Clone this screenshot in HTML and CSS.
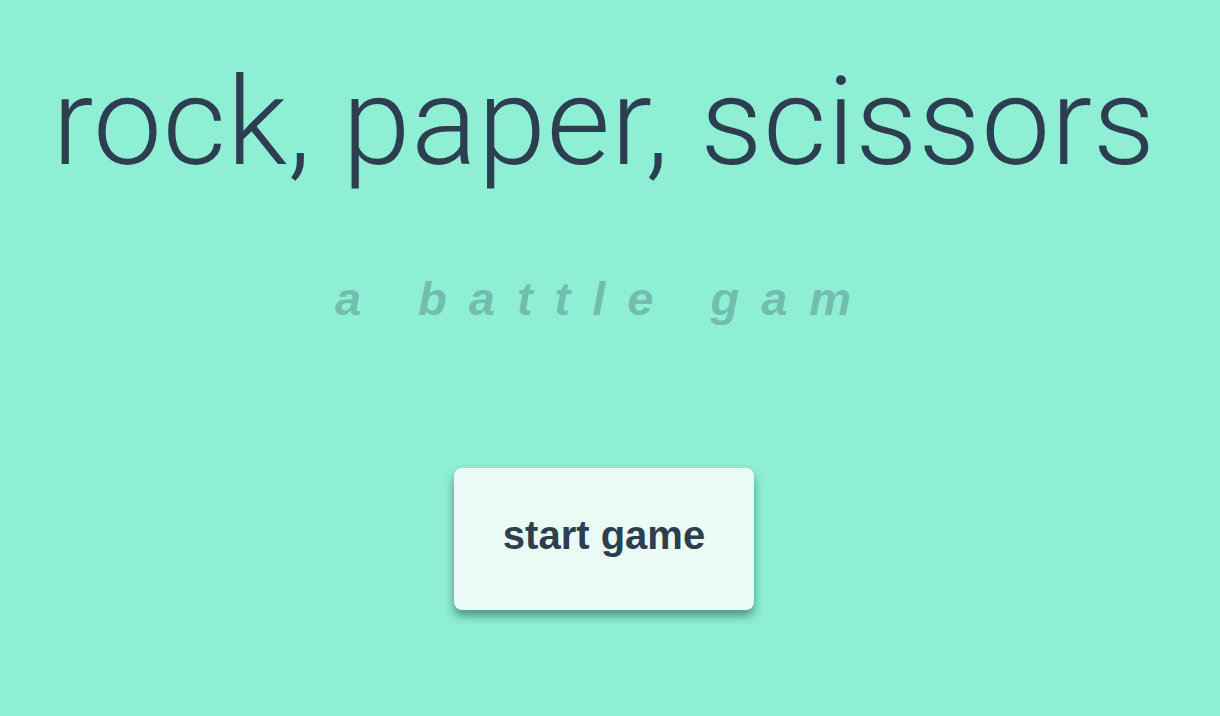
FILE: index.html
```html
<!DOCTYPE html>
<html lang="en">
<head>
<meta charset="utf-8">
<title>rock, paper, scissors</title>
<link rel="stylesheet" href="styles.css">
</head>
<body>
<main class="page">
  <h1 class="title">rock, paper, scissors</h1>
  <p class="subtitle">a battle gam</p>
  <button class="start">start game</button>
</main>
</body>
</html>
```

FILE: styles.css
```css
html, body {
  margin: 0;
  padding: 0;
  height: 100%;
}
body {
  background: #8eefd4;
  color: #2c3e50;
  font-family: Roboto, "Liberation Sans", sans-serif;
}
.page {
  display: flex;
  flex-direction: column;
  align-items: center;
  padding-right: 12px;
}
.title {
  margin: 57px 0 0;
  font-size: 123px;
  font-weight: 300;
  line-height: 130px;
  letter-spacing: 0.6px;
  white-space: nowrap;
}
.subtitle {
  margin: 87px 0 0;
  font-family: "Liberation Sans", Arial, sans-serif;
  font-size: 47px;
  font-weight: bold;
  font-style: italic;
  letter-spacing: 22px;
  line-height: 50px;
  color: rgba(44, 62, 80, 0.3);
}
.start {
  margin-top: 144px;
  width: 300px;
  height: 142px;
  padding: 0 0 8px;
  border: none;
  border-radius: 8px;
  background: #eafaf5;
  color: #2c3e50;
  font-family: "Liberation Sans", Arial, sans-serif;
  font-size: 40px;
  font-weight: bold;
  box-shadow: 0 6px 10px rgba(0, 40, 40, 0.45);
  cursor: pointer;
}
```
